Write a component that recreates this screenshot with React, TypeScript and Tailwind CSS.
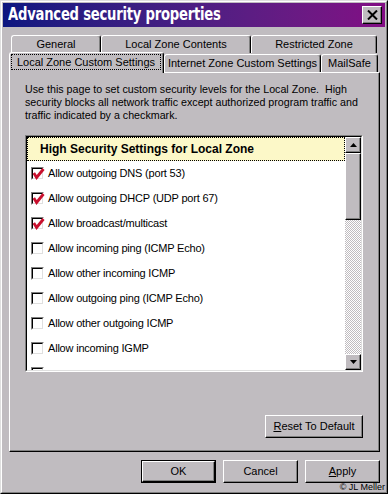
import React from 'react'

const rows = [
  { label: 'Allow outgoing DNS (port 53)', checked: true },
  { label: 'Allow outgoing DHCP (UDP port 67)', checked: true },
  { label: 'Allow broadcast/multicast', checked: true },
  { label: 'Allow incoming ping (ICMP Echo)', checked: false },
  { label: 'Allow other incoming ICMP', checked: false },
  { label: 'Allow outgoing ping (ICMP Echo)', checked: false },
  { label: 'Allow other outgoing ICMP', checked: false },
  { label: 'Allow incoming IGMP', checked: false },
  { label: '', checked: false },
]

function CheckBox({ checked }: { checked: boolean }) {
  return (
    <div className="w-[13px] h-[13px] shrink-0 border border-t-[#808080] border-l-[#808080] border-r-white border-b-white">
      <div className="w-full h-full bg-white border border-t-black border-l-black border-r-[#dfdfdf] border-b-[#dfdfdf] relative">
        {checked && (
          <svg width="13" height="13" viewBox="0 0 13 13" className="absolute -left-[1px] -top-[1px]">
            <path d="M1.8 5 L4.6 9.5 L11.5 1" stroke="#c8102e" strokeWidth="2.8" fill="none" strokeLinejoin="miter" />
          </svg>
        )}
      </div>
    </div>
  )
}

function Button({ children, isDefault, className }: { children: React.ReactNode; isDefault?: boolean; className: string }) {
  return (
    <div className={`${className} ${isDefault ? 'border border-black' : ''}`}>
      <div className="w-full h-full border border-t-white border-l-white border-r-black border-b-black shadow-[inset_-1px_-1px_#808080] flex items-center justify-center text-[11px] text-black">
        {children}
      </div>
    </div>
  )
}

function Arrow({ up }: { up: boolean }) {
  return (
    <div className="w-[16px] h-[16px] border border-t-white border-l-white border-r-black border-b-black shadow-[inset_-1px_-1px_#808080] bg-[#c0bcc0] flex items-center justify-center">
      <svg width="7" height="4" viewBox="0 0 7 4">
        {up ? <path d="M3.5 0 L7 4 L0 4 Z" fill="black" /> : <path d="M0 0 L7 0 L3.5 4 Z" fill="black" />}
      </svg>
    </div>
  )
}

export default function App() {
  return (
    <div className="w-[388px] h-[494px] overflow-hidden bg-[#c0bcc0] border border-t-[#dfdfdf] border-l-[#dfdfdf] border-r-black border-b-black font-['Liberation_Sans',Arial,sans-serif]">
      <div className="w-full h-full border border-t-white border-l-white border-r-[#808080] border-b-[#808080] p-[1px] flex flex-col">
        {/* Title bar */}
        <div className="h-[24px] shrink-0 bg-gradient-to-r from-[#0c1680] to-[#820c84] flex items-center justify-between pl-[5px] pr-[3px]">
          <span className="text-white font-bold text-[17px] tracking-[-0.3px] font-['DejaVu_Sans',sans-serif] scale-x-[0.775] origin-left whitespace-nowrap">
            Advanced security properties
          </span>
          <div className="w-[20px] h-[18px] border border-t-white border-l-white border-r-black border-b-black shadow-[inset_-1px_-1px_#808080] bg-[#c0bcc0] flex items-center justify-center">
            <svg width="11" height="10" viewBox="0 0 11 10">
              <path d="M1 0.5 L10 9.5 M10 0.5 L1 9.5" stroke="black" strokeWidth="2" />
            </svg>
          </div>
        </div>

        {/* Tabs */}
        <div className="mt-[8px] pl-[6px] text-[11px] text-black whitespace-nowrap">
          <div className="flex ml-[2px] h-[18px]">
            <div className="w-[90px] border-t border-l border-white border-r border-r-black rounded-t-[3px] shadow-[inset_-1px_0_#808080] flex items-end justify-center pb-[1px]">General</div>
            <div className="w-[150px] border-t border-l border-white border-r border-r-black rounded-t-[3px] shadow-[inset_-1px_0_#808080] flex items-end justify-center pb-[1px]">Local Zone Contents</div>
            <div className="w-[126px] border-t border-l border-white border-r border-r-black rounded-t-[3px] shadow-[inset_-1px_0_#808080] flex items-end justify-center pb-[1px]">Restricted Zone</div>
          </div>
          <div className="flex h-[19px] relative z-10">
            <div className="w-[155px] h-[21px] -mt-[1px] bg-[#c0bcc0] border-t border-l border-white border-r border-r-black rounded-t-[3px] shadow-[inset_-1px_0_#808080] p-[1px] pr-[2px]">
              <div className="w-full h-[16px] border border-dotted border-black flex items-center justify-center">Local Zone Custom Settings</div>
            </div>
            <div className="w-[157px] mt-[1px] border-t border-l border-white border-r border-r-black rounded-t-[3px] shadow-[inset_-1px_0_#808080] flex items-center justify-center">Internet Zone Custom Settings</div>
            <div className="w-[57px] mt-[1px] border-t border-l border-white border-r border-r-black rounded-t-[3px] shadow-[inset_-1px_0_#808080] flex items-center justify-center">MailSafe</div>
          </div>
        </div>

        {/* Panel */}
        <div className="ml-[6px] w-[371px] h-[380px] shrink-0 border border-t-white border-l-white border-r-black border-b-black shadow-[inset_-1px_-1px_#808080] pt-[10px] pl-[15px] flex flex-col">
          <p className="text-[10.7px] leading-[13px] text-black w-[338px]">
            Use this page to set custom security levels for the Local Zone.&nbsp; High security blocks all network traffic except authorized program traffic and traffic indicated by a checkmark.
          </p>

          {/* List box */}
          <div className="mt-[13px] w-[338px] h-[237px] border border-t-[#808080] border-l-[#808080] border-r-white border-b-white">
            <div className="w-full h-full border border-t-black border-l-black border-r-[#dfdfdf] border-b-[#dfdfdf] bg-white flex overflow-hidden">
              <div className="flex-1 flex flex-col overflow-hidden">
                <div className="h-[24px] shrink-0 bg-[#fcf8c8] border border-dotted border-black flex items-center pl-[12px] text-[12px] font-bold text-black">
                  High Security Settings for Local Zone
                </div>
                {rows.map((r, i) => (
                  <div key={i} className="h-[25px] shrink-0 flex items-center pl-[4px] gap-[4px] text-[11px] tracking-[-0.2px] text-black">
                    <CheckBox checked={r.checked} />
                    {r.label && <span className="whitespace-nowrap">{r.label}</span>}
                  </div>
                ))}
              </div>
              {/* Scrollbar */}
              <div className="w-[16px] flex flex-col shrink-0">
                <Arrow up />
                <div className="h-[67px] border border-t-white border-l-white border-r-black border-b-black shadow-[inset_-1px_-1px_#808080] bg-[#c0bcc0]" />
                <div className="flex-1 bg-[repeating-conic-gradient(#c0bcc0_0%_25%,#ffffff_0%_50%)] bg-size-[2px_2px]" />
                <Arrow up={false} />
              </div>
            </div>
          </div>

          <div className="flex justify-end w-[338px] mt-[43px]">
            <Button className="w-[98px] h-[23px]">
              <span><span className="underline">R</span>eset To Default</span>
            </Button>
          </div>
        </div>

        {/* Buttons */}
        <div className="flex justify-end gap-[7px] mt-[8px] w-[377px] shrink-0">
          <Button isDefault className="w-[75px] h-[23px]">OK</Button>
          <Button className="w-[75px] h-[23px]">Cancel</Button>
          <Button className="w-[75px] h-[23px]">
            <span><span className="underline">A</span>pply</span>
          </Button>
        </div>
        <div className="flex justify-end -mt-[1px]">
          <span className="text-[9px] leading-[10px] text-black">© JL Meller</span>
        </div>
      </div>
    </div>
  )
}
